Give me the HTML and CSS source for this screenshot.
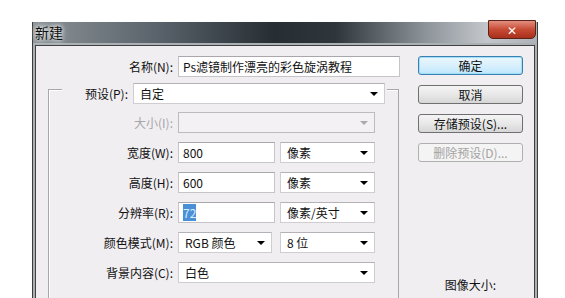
FILE: index.html
```html
<!DOCTYPE html>
<html lang="zh-CN">
<head>
    <meta charset="UTF-8">
    <title>新建</title>
    <link rel="stylesheet" href="styles.css">
</head>
<body>

<div class="window">
    <div class="titlebar">
        <div class="title">新建</div>
        <div class="close">✕</div>
    </div>

    <div class="frame">
        <div class="panel">
            <div class="form">
                <div class="row first">
                    <label class="lbl wide">名称(N):</label>
                    <div class="input name">Ps滤镜制作漂亮的彩色旋涡教程</div>
                </div>

                <div class="preset-box">
                    <div class="preset-row">
                        <label class="lbl preset-lbl">预设(P):</label>
                        <div class="select preset"><span>自定</span><i class="arrow"></i></div>
                    </div>

                    <div class="row size-row">
                        <label class="lbl off">大小(I):</label>
                        <div class="select off size"><span></span><i class="arrow"></i></div>
                    </div>

                    <div class="row">
                        <label class="lbl">宽度(W):</label>
                        <div class="input num">800</div>
                        <div class="select unit"><span>像素</span><i class="arrow"></i></div>
                    </div>

                    <div class="row">
                        <label class="lbl">高度(H):</label>
                        <div class="input num">600</div>
                        <div class="select unit"><span>像素</span><i class="arrow"></i></div>
                    </div>

                    <div class="row">
                        <label class="lbl">分辨率(R):</label>
                        <div class="input num"><span class="sel">72</span></div>
                        <div class="select unit"><span>像素/英寸</span><i class="arrow"></i></div>
                    </div>

                    <div class="row">
                        <label class="lbl">颜色模式(M):</label>
                        <div class="select mode"><span>RGB 颜色</span><i class="arrow"></i></div>
                        <div class="select unit"><span>8 位</span><i class="arrow"></i></div>
                    </div>

                    <div class="row">
                        <label class="lbl">背景内容(C):</label>
                        <div class="select size"><span>白色</span><i class="arrow"></i></div>
                    </div>
                </div>
            </div>

            <div class="side">
                <button class="btn default">确定</button>
                <button class="btn">取消</button>
                <button class="btn">存储预设(S)...</button>
                <button class="btn" disabled>删除预设(D)...</button>
                <div class="img-size">图像大小:</div>
            </div>
        </div>
    </div>
</div>

</body>
</html>
```

FILE: styles.css
```css
body {
    margin: 0;
    background: #ffffff;
    font-family: "Noto Sans CJK SC", "DejaVu Sans", sans-serif;
    font-size: 12px;
    color: #111;
}
.window {
    margin: 22px 0 0 32px;
    width: 506px;
}
.titlebar {
    height: 21px;
    display: flex;
    justify-content: space-between;
    align-items: flex-start;
    background: linear-gradient(90deg, #8c9398 0%, #59626a 25%, #262d33 48%, #2e363c 60%, #8d949a 78%, #c3c7cb 90%, #aeb3b7 100%);
    border-left: 1px solid #3c3c3c;
    border-right: 1px solid #3c3c3c;
}
.title {
    font-size: 14px;
    line-height: 21px;
    padding-left: 2px;
    color: #101010;
    text-shadow: 0 0 4px #fff, 0 0 6px #fff;
}
.close {
    width: 46px;
    height: 17px;
    margin: -2px 1px 0 0;
    border: 1px solid #5a2218;
    border-radius: 0 0 5px 5px;
    background: linear-gradient(#e28f7e, #c74a34 50%, #a8301c);
    color: #fff;
    font-size: 12px;
    font-weight: bold;
    line-height: 17px;
    text-align: center;
}
.frame {
    background: #aab0b4;
    border-left: 1px solid #3c3c3c;
    border-right: 1px solid #3c3c3c;
    padding: 2px 2px 0;
}
.panel {
    display: flex;
    height: 252px;
    background: #f0eef1;
    border: 1px solid #404040;
    border-bottom: none;
}
.form {
    width: 364px;
}
.row {
    display: flex;
    align-items: center;
    height: 21px;
    margin-top: 9px;
}
.row.first {
    margin-top: 10px;
}
.lbl {
    flex: none;
    width: 124px;
    padding-right: 5px;
    text-align: right;
    white-space: nowrap;
}
.lbl.wide {
    width: 137px;
}
.lbl.off {
    color: #a8a6aa;
}
.input {
    height: 19px;
    line-height: 19px;
    padding-left: 4px;
    background: #fff;
    border: 1px solid #c6c4c8;
    border-top-color: #a9a7ab;
    box-sizing: content-box;
}
.input.name {
    width: 216px;
}
.input.num {
    width: 91px;
}
.sel {
    background: #4a90d6;
    color: #d8ecff;
}
.select {
    display: flex;
    align-items: center;
    justify-content: space-between;
    height: 19px;
    padding: 0 6px 0 6px;
    background: #fff;
    border: 1px solid #cfcdd1;
    border-top-color: #b4b2b6;
}
.select.off {
    background: #f3f1f4;
    border-color: #bdbbbf;
}
.select.off .arrow {
    border-top-color: #aaa;
}
.arrow {
    width: 0;
    height: 0;
    border-left: 4px solid transparent;
    border-right: 4px solid transparent;
    border-top: 4px solid #000;
}
.select.preset {
    width: 238px;
    margin-left: 5px;
}
.select.size {
    width: 183px;
}
.select.unit {
    width: 81px;
    margin-left: 5px;
}
.select.mode {
    width: 80px;
}
.select.mode + .unit {
    margin-left: 8px;
}
.preset-box {
    margin: 12px 0 0 12px;
    width: 349px;
    height: 208px;
    border: 1px solid #a8a8ab;
    border-bottom: none;
    box-shadow: inset 1px 1px 0 #fff;
}
.preset-row {
    display: flex;
    align-items: center;
    height: 21px;
    width: 325px;
    margin: -7px 0 0 13px;
    background: #f0eef1;
}
.preset-lbl {
    width: 66px;
    padding-right: 0;
}
.size-row {
    margin-top: 8px;
}
.side {
    display: flex;
    flex-direction: column;
    align-items: flex-start;
    padding-left: 18px;
}
.btn {
    width: 105px;
    height: 19px;
    margin-top: 10px;
    padding: 0;
    font-family: inherit;
    font-size: 12px;
    line-height: 16px;
    color: #111;
    background: linear-gradient(#f4f4f4, #e8e8e8 50%, #d6d6d6);
    border: 1px solid #707070;
    border-radius: 3px;
}
.btn.default {
    border-color: #3c7fb1;
    background: linear-gradient(#eaf6fd, #d9f0fc 50%, #bee6fd);
    box-shadow: inset 0 0 0 1px #9fe0f8;
}
.btn:disabled {
    color: #a3a3a3;
    background: #f4f4f4;
    border-color: #b0b0b0;
}
.img-size {
    width: 105px;
    margin-top: 114px;
    text-align: center;
}
```
